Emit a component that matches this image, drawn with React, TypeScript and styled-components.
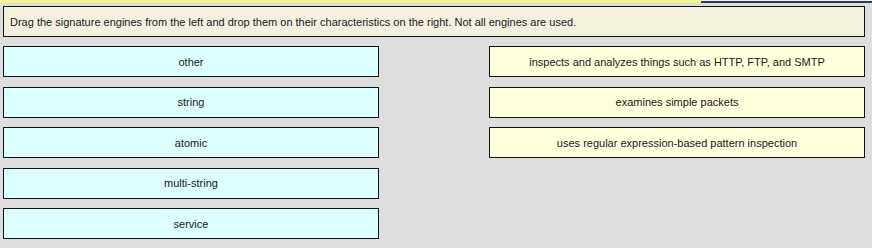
import React from 'react';
import styled, { createGlobalStyle } from 'styled-components';

const GlobalStyle = createGlobalStyle`
  html, body {
    margin: 0;
    padding: 0;
    background: #dedede;
  }
  body {
    font-family: "Liberation Sans", Arial, sans-serif;
    font-size: 11px;
    color: #1a1a1a;
  }
`;

const TopStrip = styled.div`
  display: flex;
  height: 3px;
`;

const Highlight = styled.div`
  width: 701px;
  background: #f6f58a;
`;

const Rule = styled.div`
  flex: 1;
  border-top: 1px solid #f2f2f2;
  background: #2e3f4c;
`;

const Page = styled.div`
  padding: 3px 7px 0 3px;
`;

const Prompt = styled.div`
  height: 29px;
  display: flex;
  align-items: center;
  padding: 0 6px;
  background: #f3f1de;
  border: 1px solid #111;
`;

const Board = styled.div`
  display: grid;
  grid-template-columns: 376px 376px;
  column-gap: 110px;
  margin-top: 9px;
  align-items: start;
`;

const Column = styled.div`
  display: flex;
  flex-direction: column;
  gap: 9.5px;
`;

const Tile = styled.div<{ $tone: 'source' | 'target' }>`
  box-sizing: border-box;
  height: 31px;
  display: flex;
  align-items: center;
  justify-content: center;
  border: 1px solid #111;
  background: ${p => (p.$tone === 'source' ? '#dcffff' : '#ffffdc')};
`;

const engines = ['other', 'string', 'atomic', 'multi-string', 'service'];

const traits = [
  'inspects and analyzes things such as HTTP, FTP, and SMTP',
  'examines simple packets',
  'uses regular expression-based pattern inspection',
];

export default function App() {
  return (
    <>
      <GlobalStyle />
      <TopStrip>
        <Highlight />
        <Rule />
      </TopStrip>
      <Page>
        <Prompt>
          Drag the signature engines from the left and drop them on their characteristics on the right. Not all engines are used.
        </Prompt>
        <Board>
          <Column>
            {engines.map(e => (
              <Tile key={e} $tone="source">{e}</Tile>
            ))}
          </Column>
          <Column>
            {traits.map(t => (
              <Tile key={t} $tone="target">{t}</Tile>
            ))}
          </Column>
        </Board>
      </Page>
    </>
  );
}
